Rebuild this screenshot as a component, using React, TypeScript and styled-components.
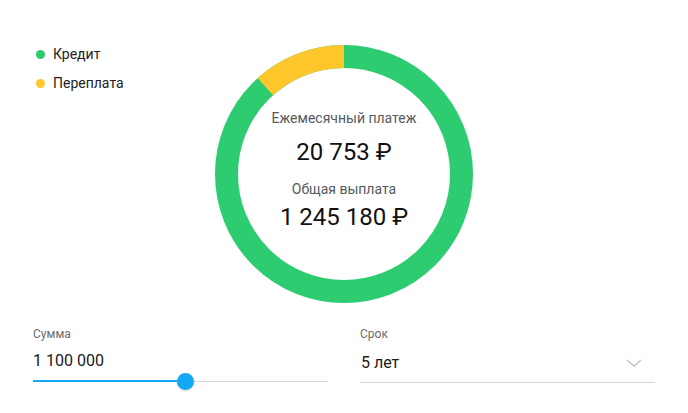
import React from "react";
import styled, { createGlobalStyle } from "styled-components";

const GlobalStyle = createGlobalStyle`
    html, body {
        margin: 0;
        padding: 0;
        background: #ffffff;
    }
    body {
        font-family: Roboto, "Liberation Sans", sans-serif;
        color: #1a1a1a;
    }
`;

const GREEN = "#2ecc71";
const YELLOW = "#ffc72c";
const BLUE = "#12a9f6";

const Page = styled.div`
    width: 688px;
    height: 413px;
    box-sizing: border-box;
    padding-top: 45px;
    display: flex;
    flex-direction: column;
`;

const Top = styled.div`
    display: grid;
    grid-template-columns: 1fr auto 1fr;
`;

const Legend = styled.ul`
    list-style: none;
    margin: 0;
    padding: 0 0 0 36px;
    display: flex;
    flex-direction: column;
    gap: 11px;
`;

const LegendItem = styled.li<{ $color: string }>`
    display: flex;
    align-items: center;
    gap: 8px;
    font-size: 14px;
    line-height: 18px;
    color: #222;

    &::before {
        content: "";
        width: 9px;
        height: 9px;
        border-radius: 50%;
        background: ${(p) => p.$color};
    }
`;

const ChartBox = styled.div`
    position: relative;
    width: 258px;
    height: 258px;
`;

const ChartText = styled.div`
    position: absolute;
    inset: 0;
    display: flex;
    flex-direction: column;
    align-items: center;
    padding-top: 65px;
`;

const Caption = styled.div`
    font-size: 14px;
    line-height: 16px;
    color: #555a60;
`;

const Amount = styled.div<{ $top: number; $bottom: number }>`
    font-size: 24px;
    line-height: 28px;
    color: #111;
    margin-top: ${(p) => p.$top}px;
    margin-bottom: ${(p) => p.$bottom}px;
`;

const Controls = styled.div`
    display: grid;
    grid-template-columns: 1fr 1fr;
    gap: 32px;
    padding: 0 33px;
    margin-top: 24px;
`;

const Field = styled.div`
    display: flex;
    flex-direction: column;
`;

const Label = styled.div`
    font-size: 12px;
    line-height: 14px;
    color: #6b6b70;
    margin-bottom: 10px;
`;

const Value = styled.div`
    font-size: 16px;
    line-height: 20px;
    color: #1a1a1a;
`;

const SliderTrack = styled.div`
    position: relative;
    height: 16px;
    margin-top: 2px;
    display: flex;
    align-items: center;

    &::before {
        content: "";
        position: absolute;
        left: 1px;
        right: 0;
        height: 1px;
        background: #d7d7e0;
    }
`;

const SliderFill = styled.div`
    position: relative;
    height: 2px;
    background: ${BLUE};
`;

const SliderThumb = styled.div`
    position: absolute;
    width: 17px;
    height: 17px;
    margin-left: -8px;
    border-radius: 50%;
    background: ${BLUE};
    box-shadow: 0 1px 2px rgba(0, 0, 0, 0.18);
`;

const Select = styled.div`
    display: flex;
    align-items: center;
    justify-content: space-between;
    border-bottom: 1px solid #d8d8dc;
    padding: 2px 13px 9px 1px;
`;

const Chevron = () => (
    <svg width="16" height="8" viewBox="0 0 16 8" fill="none">
        <path d="M1 1l7 6 7-6" stroke="#c2c3ca" strokeWidth="1.4" />
    </svg>
);

const Donut: React.FC<{ share: number }> = ({ share }) => {
    const r = 117.5;
    const c = 2 * Math.PI * r;
    const over = c * share;
    return (
        <svg width="258" height="258" viewBox="0 0 258 258">
            <circle cx="129" cy="129" r={r} fill="none" stroke={GREEN} strokeWidth="23" />
            <circle
                cx="129"
                cy="129"
                r={r}
                fill="none"
                stroke={YELLOW}
                strokeWidth="23"
                strokeDasharray={`${over} ${c - over}`}
                transform="rotate(-90 129 129) scale(1 -1) translate(0 -258)"
            />
        </svg>
    );
};

export default function App() {
    const credit = 1100000;
    const total = 1245180;
    const share = (total - credit) / total;
    const pos = 151 / 294;

    return (
        <>
            <GlobalStyle />
            <Page>
                <Top>
                    <Legend>
                        <LegendItem $color={GREEN}>Кредит</LegendItem>
                        <LegendItem $color={YELLOW}>Переплата</LegendItem>
                    </Legend>
                    <ChartBox>
                        <Donut share={share} />
                        <ChartText>
                            <Caption>Ежемесячный платеж</Caption>
                            <Amount $top={12} $bottom={15}>20 753 ₽</Amount>
                            <Caption>Общая выплата</Caption>
                            <Amount $top={6} $bottom={0}>1 245 180 ₽</Amount>
                        </ChartText>
                    </ChartBox>
                    <div />
                </Top>
                <Controls>
                    <Field>
                        <Label>Сумма</Label>
                        <Value>1 100 000</Value>
                        <SliderTrack>
                            <SliderFill style={{ width: `${pos * 100}%` }} />
                            <SliderThumb style={{ left: `${pos * 100}%` }} />
                        </SliderTrack>
                    </Field>
                    <Field>
                        <Label>Срок</Label>
                        <Select>
                            <Value>5 лет</Value>
                            <Chevron />
                        </Select>
                    </Field>
                </Controls>
            </Page>
        </>
    );
}
